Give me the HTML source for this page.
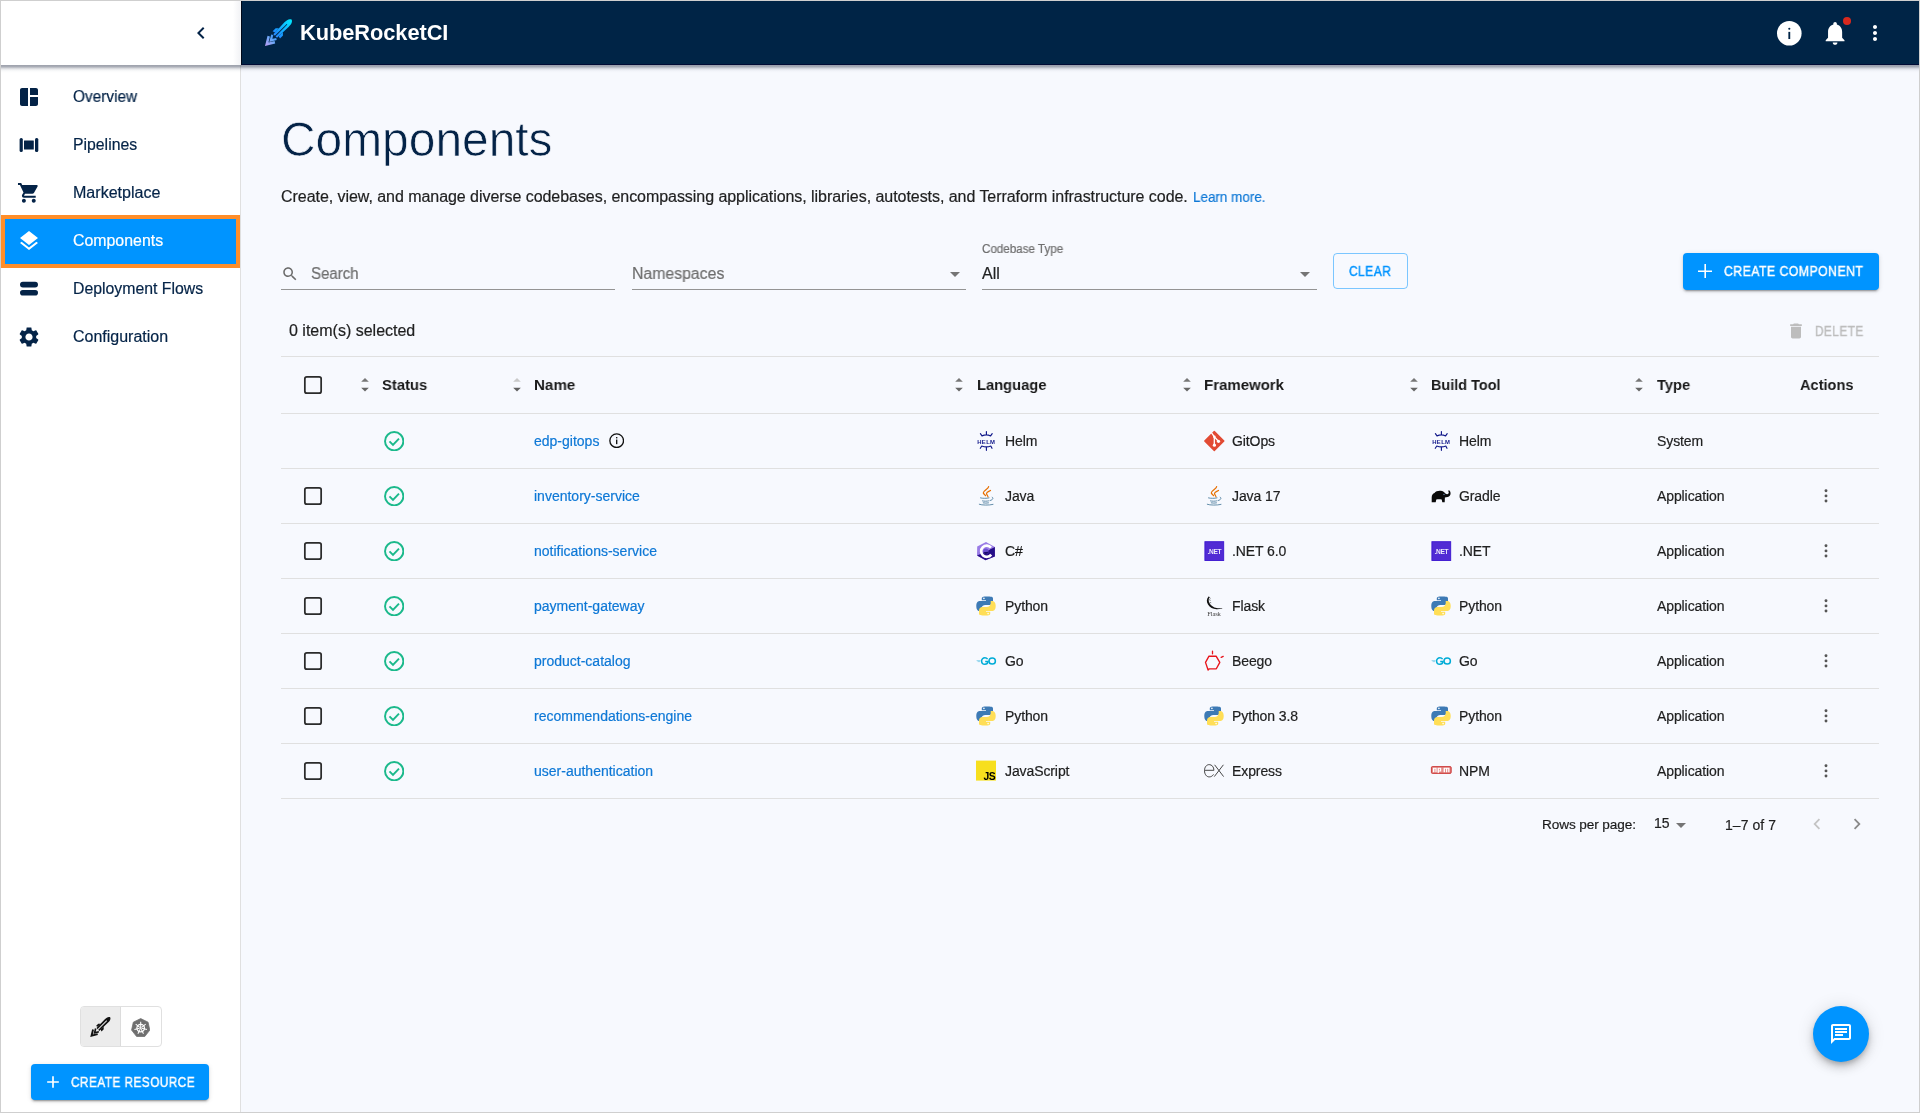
<!DOCTYPE html>
<html><head><meta charset="utf-8">
<style>
*{box-sizing:border-box;margin:0;padding:0}
html,body{width:1920px;height:1113px;overflow:hidden}
body{background:#f7f9fe;font-family:"Liberation Sans",sans-serif;position:relative;color:rgba(0,0,0,0.87)}
.abs{position:absolute}
svg.abs{will-change:transform}
.t{position:absolute;white-space:nowrap;line-height:1;will-change:transform;-webkit-text-stroke:0.2px currentColor}
</style></head>
<body>
<div class="abs" style="left:1px;top:1px;width:239px;height:1111px;background:#fff"></div>
<div class="abs" style="left:240px;top:1px;width:1px;height:1111px;background:#e0e0e0"></div>
<div class="abs" style="left:1px;top:214.8px;width:239px;height:52.8px;background:#0094ff;border:4px solid #ff8e2a"></div>
<div class="t" style="left:73.30px;top:88.73px;font-size:15.8px;color:#042347;transform:scaleX(0.9727);transform-origin:0 0;">Overview</div>
<div class="t" style="left:73.30px;top:136.73px;font-size:15.8px;color:#042347;transform:scaleX(1.0000);transform-origin:0 0;">Pipelines</div>
<div class="t" style="left:73.30px;top:184.73px;font-size:15.8px;color:#042347;transform:scaleX(1.0163);transform-origin:0 0;">Marketplace</div>
<div class="t" style="left:73.30px;top:232.73px;font-size:15.8px;color:#fff;transform:scaleX(1.0056);transform-origin:0 0;">Components</div>
<div class="t" style="left:73.30px;top:280.73px;font-size:15.8px;color:#042347;transform:scaleX(1.0008);transform-origin:0 0;">Deployment Flows</div>
<div class="t" style="left:73.30px;top:328.73px;font-size:15.8px;color:#042347;transform:scaleX(1.0117);transform-origin:0 0;">Configuration</div>
<svg class="abs" style="left:17px;top:85px;" width="24" height="24" viewBox="0 0 24 24"><g fill="#042347"><path d="M11 21H5c-1.1 0-2-.9-2-2V5c0-1.1.9-2 2-2h6v18zm2 0h6c1.1 0 2-.9 2-2v-7h-8v9zm8-11V5c0-1.1-.9-2-2-2h-6v7h8z"/></g></svg>
<svg class="abs" style="left:17px;top:133px;" width="24" height="24" viewBox="0 0 24 24"><g fill="#042347"><rect x="2.6" y="5" width="3.2" height="14" rx="1.5"/><rect x="7" y="7.4" width="9.8" height="9.2" rx="0.4"/><rect x="18" y="5" width="3.3" height="14" rx="1.5"/></g></svg>
<svg class="abs" style="left:17px;top:181px;" width="24" height="24" viewBox="0 0 24 24"><g fill="#042347" transform="scale(0.985)"><path d="M7 18c-1.1 0-1.99.9-1.99 2S5.9 22 7 22s2-.9 2-2-.9-2-2-2zM1 2v2h2l3.6 7.59-1.35 2.45c-.16.28-.25.61-.25.96 0 1.1.9 2 2 2h12v-2H7.42c-.14 0-.25-.11-.25-.25l.03-.12.9-1.63h7.45c.75 0 1.41-.41 1.75-1.03l3.58-6.49c.08-.14.12-.31.12-.48 0-.55-.45-1-1-1H5.21l-.94-2H1zm16 16c-1.1 0-1.99.9-1.99 2s.89 2 1.99 2 2-.9 2-2-.9-2-2-2z"/></g></svg>
<svg class="abs" style="left:17px;top:229px;" width="24" height="24" viewBox="0 0 24 24"><path fill="#fff" d="M11.99 18.54l-7.37-5.73L3 14.07l9 7 9-7-1.63-1.27-7.38 5.74zM12 16l7.36-5.73L21 9l-9-7-9 7 1.63 1.27L12 16z"/></svg>
<svg class="abs" style="left:17px;top:277px;" width="24" height="24" viewBox="0 0 24 24"><g fill="#042347"><rect x="3" y="4.7" width="18" height="5.8" rx="2.9"/><rect x="3" y="13" width="18" height="5.6" rx="2.8"/></g></svg>
<svg class="abs" style="left:17px;top:324.6px;" width="24" height="24" viewBox="0 0 24 24"><path fill="#042347" d="M19.14 12.94c.04-.3.06-.61.06-.94 0-.32-.02-.64-.07-.94l2.03-1.58c.18-.14.23-.41.12-.61l-1.92-3.32c-.12-.22-.37-.29-.59-.22l-2.39.96c-.5-.38-1.03-.7-1.62-.94l-.36-2.54c-.04-.24-.24-.41-.48-.41h-3.84c-.24 0-.43.17-.47.41l-.36 2.54c-.59.24-1.13.57-1.62.94l-2.39-.96c-.22-.08-.47 0-.59.22L2.74 8.87c-.12.21-.08.47.12.61l2.03 1.58c-.05.3-.09.63-.09.94s.02.64.07.94l-2.03 1.58c-.18.14-.23.41-.12.61l1.92 3.32c.12.22.37.29.59.22l2.39-.96c.5.38 1.03.7 1.62.94l.36 2.54c.05.24.24.41.48.41h3.84c.24 0 .44-.17.47-.41l.36-2.54c.59-.24 1.13-.56 1.62-.94l2.39.96c.22.08.47 0 .59-.22l1.92-3.32c.12-.22.07-.47-.12-.61l-2.01-1.58zM12 15.6c-1.98 0-3.6-1.62-3.6-3.6s1.62-3.6 3.6-3.6 3.6 1.62 3.6 3.6-1.62 3.6-3.6 3.6z"/></svg>
<div class="abs" style="left:79.5px;top:1006.3px;width:82px;height:41.2px;border:1px solid #e0e0e0;border-radius:4px;background:#fff;overflow:hidden"><div class="abs" style="left:0;top:0;width:40.5px;height:40px;background:#ececec;border-right:1px solid #dcdcdc"></div></div>
<div class="abs" style="left:31px;top:1064.2px;width:178.2px;height:35.8px;background:#0094ff;border-radius:4px;box-shadow:0 3px 1px -2px rgba(0,0,0,.2),0 2px 2px 0 rgba(0,0,0,.14),0 1px 5px 0 rgba(0,0,0,.12)"></div>
<svg class="abs" style="left:42.8px;top:1072.2px;" width="20" height="20" viewBox="0 0 24 24"><path fill="#fff" d="M19 13h-6v6h-2v-6H5v-2h6V5h2v6h6v2z"/></svg>
<div class="t" style="left:70.70px;top:1076.22px;font-size:13.8px;color:#fff;transform:scaleX(0.8501);transform-origin:0 0;-webkit-text-stroke:0.45px currentColor;letter-spacing:0.6px;">CREATE RESOURCE</div>
<div class="abs" style="left:1px;top:1px;width:240px;height:64px;background:linear-gradient(90deg,#fff 0,#fff 232px,#f1f2f5 240px);z-index:2"></div>
<svg class="abs" style="left:189.1px;top:21px;z-index:3" width="24" height="24" viewBox="0 0 24 24"><path fill="#042347" d="M15.41 7.41L14 6l-6 6 6 6 1.41-1.41L10.83 12z"/></svg>
<div class="abs" style="left:1px;top:65px;width:1918px;height:8px;z-index:2;background:linear-gradient(rgba(20,30,55,0.42) 0px,rgba(20,30,55,0.37) 1.5px,rgba(20,30,55,0.27) 2.5px,rgba(20,30,55,0.16) 3.5px,rgba(20,30,55,0.085) 4.5px,rgba(20,30,55,0.04) 5.5px,rgba(20,30,55,0.015) 6.5px,rgba(20,30,55,0) 8px)"></div>
<div class="abs" style="left:241px;top:1px;width:1678px;height:64px;background:#002446;border-left:1px solid #00091a;border-bottom:1px solid #000b35;z-index:2"></div>
<div class="abs" style="left:0;top:0;width:1920px;height:1113px;z-index:4;pointer-events:none">
<div class="t" style="left:299.50px;top:21.75px;font-size:21.8px;color:#fff;font-weight:700;-webkit-text-stroke:0;letter-spacing:-0.05px;">KubeRocketCI</div>
<svg class="abs" style="left:258px;top:14px;overflow:visible" width="40" height="40" viewBox="0 0 40 40"><defs><linearGradient id="rg" gradientUnits="userSpaceOnUse" x1="0" y1="0" x2="0" y2="38"><stop offset="0" stop-color="#00eaff"/><stop offset="0.55" stop-color="#1e8cff"/><stop offset="0.75" stop-color="#6aa8f8"/><stop offset="1" stop-color="#c79cf2"/></linearGradient></defs>
<g transform="translate(33.6 5.6) rotate(45)" fill="url(#rg)"><path d="M0 0C2.6 .9 3.2 4 3.1 7L2.6 23.2H-2.6L-3.1 7C-3.2 4-2.6 .9 0 0Z"/>
<path d="M-2.8 15.2-5.2 17.4-5.2 21.6-2.6 20.8Z"/><path d="M2.8 15.2 5.2 17.4 5.2 21.6 2.6 20.8Z"/>
<path d="M-4.5 27.8-0.2 35 4.2 27.8" fill="none" stroke="url(#rg)" stroke-width="2.5"/><path d="M-3 24.4 0 29.4 3 24.4" fill="none" stroke="url(#rg)" stroke-width="2.2"/><path d="M-0.45 6.5h0.9v17.5h-0.9z" fill="#002446"/></g></svg>
<svg class="abs" style="left:1776.8px;top:20.5px;" width="24.6" height="24.6" viewBox="0 0 24 24"><circle cx="12" cy="12" r="12" fill="#fff"/><rect x="11.1" y="10.6" width="1.8" height="7" fill="#002446"/><circle cx="12" cy="7.6" r="1.05" fill="#002446"/></svg>
<svg class="abs" style="left:1820.9px;top:18.5px;" width="28.2" height="28.2" viewBox="0 0 24 24"><path fill="#fff" d="M12 22c1.1 0 2-.9 2-2h-4c0 1.1.89 2 2 2zm6-6v-5c0-3.07-1.64-5.64-4.5-6.32V4c0-.83-.67-1.5-1.5-1.5s-1.5.67-1.5 1.5v.68C7.63 5.36 6 7.92 6 11v5l-2 2v1h16v-1l-2-2z"/></svg>
<div class="abs" style="left:1842.8px;top:16.9px;width:8.4px;height:8.4px;border-radius:50%;background:#d8291e"></div>
<svg class="abs" style="left:1863px;top:21px;" width="24" height="24" viewBox="0 0 24 24"><path fill="#fff" d="M12 8c1.1 0 2-.9 2-2s-.9-2-2-2-2 .9-2 2 .9 2 2 2zm0 2c-1.1 0-2 .9-2 2s.9 2 2 2 2-.9 2-2-.9-2-2-2zm0 6c-1.1 0-2 .9-2 2s.9 2 2 2 2-.9 2-2-.9-2-2-2z"/></svg>
</div>
<div class="t" style="left:281.00px;top:116.45px;font-size:47.9px;color:#042347;-webkit-text-stroke:0.7px #f7f9fe;paint-order:normal;">Components</div>
<div class="t" style="left:281.00px;top:188.76px;font-size:16px;color:rgba(0,0,0,0.87);letter-spacing:-0.05px;">Create, view, and manage diverse codebases, encompassing applications, libraries, autotests, and Terraform infrastructure code.</div>
<div class="t" style="left:1192.90px;top:190.10px;font-size:14.3px;color:#0e78d6;transform:scaleX(0.9403);transform-origin:0 0;">Learn more.</div>
<svg class="abs" style="left:280.7px;top:265.2px;" width="18" height="18" viewBox="0 0 24 24"><path fill="#6b6b6b" d="M15.5 14h-.79l-.28-.27C15.41 12.59 16 11.11 16 9.5 16 5.91 13.09 3 9.5 3S3 5.91 3 9.5 5.91 16 9.5 16c1.61 0 3.09-.59 4.23-1.57l.27.28v.79l5 4.99L20.49 19l-4.99-5zm-6 0C7.01 14 5 11.99 5 9.5S7.01 5 9.5 5 14 7.01 14 9.5 11.99 14 9.5 14z"/></svg>
<div class="t" style="left:311.30px;top:266.36px;font-size:16px;color:#6e6e6e;transform:scaleX(0.9389);transform-origin:0 0;">Search</div>
<div class="abs" style="left:281px;top:288.7px;width:334px;height:1px;background:#949494"></div>
<div class="t" style="left:631.90px;top:266.36px;font-size:16px;color:#6e6e6e;transform:scaleX(0.9882);transform-origin:0 0;">Namespaces</div>
<div class="abs" style="left:631.5px;top:288.7px;width:334px;height:1px;background:#949494"></div>
<svg class="abs" style="left:949.5px;top:271.7px;" width="10" height="5" viewBox="0 0 10 5"><path fill="#757575" d="M0 0h10L5 5z"/></svg>
<div class="t" style="left:982.20px;top:242.74px;font-size:12px;color:#6e6e6e;transform:scaleX(0.9678);transform-origin:0 0;">Codebase Type</div>
<div class="t" style="left:982.00px;top:266.26px;font-size:16px;color:rgba(0,0,0,0.87);">All</div>
<div class="abs" style="left:982px;top:288.7px;width:334.5px;height:1px;background:#949494"></div>
<svg class="abs" style="left:1300px;top:271.7px;" width="10" height="5" viewBox="0 0 10 5"><path fill="#757575" d="M0 0h10L5 5z"/></svg>
<div class="abs" style="left:1333px;top:253.4px;width:74.5px;height:36px;border:1px solid rgba(0,148,255,0.5);border-radius:4px"></div>
<div class="t" style="left:1349.20px;top:265.42px;font-size:13.8px;color:#0094ff;transform:scaleX(0.8636);transform-origin:0 0;-webkit-text-stroke:0.45px currentColor;letter-spacing:0.6px;">CLEAR</div>
<div class="abs" style="left:1683.4px;top:253px;width:195.6px;height:36.5px;background:#0094ff;border-radius:4px;box-shadow:0 3px 1px -2px rgba(0,0,0,.2),0 2px 2px 0 rgba(0,0,0,.14),0 1px 5px 0 rgba(0,0,0,.12)"></div>
<svg class="abs" style="left:1693px;top:258.8px;" width="24" height="24" viewBox="0 0 24 24"><path fill="#fff" d="M19 13h-6v6h-1.6v-6H5v-1.6h6.4V5H13v6.4h6z"/></svg>
<div class="t" style="left:1723.70px;top:265.12px;font-size:13.8px;color:#fff;transform:scaleX(0.8819);transform-origin:0 0;-webkit-text-stroke:0.45px currentColor;letter-spacing:0.6px;">CREATE COMPONENT</div>
<div class="t" style="left:289.00px;top:323.06px;font-size:16px;color:rgba(0,0,0,0.87);">0 item(s) selected</div>
<svg class="abs" style="left:1786.2px;top:320.8px;" width="20" height="20" viewBox="0 0 24 24"><path fill="#bdbdbd" d="M6 19c0 1.1.9 2 2 2h8c1.1 0 2-.9 2-2V7H6v12zM19 4h-3.5l-1-1h-5l-1 1H5v2h14V4z"/></svg>
<div class="t" style="left:1814.70px;top:324.92px;font-size:13.8px;color:#bdbdbd;transform:scaleX(0.8501);transform-origin:0 0;-webkit-text-stroke:0.45px currentColor;letter-spacing:0.6px;">DELETE</div>
<div class="abs" style="left:281px;top:355.5px;width:1598px;height:1px;background:#e0e0e0"></div>
<div class="abs" style="left:281px;top:412.5px;width:1598px;height:1px;background:#e0e0e0"></div>
<div class="abs" style="left:281px;top:467.5px;width:1598px;height:1px;background:#e0e0e0"></div>
<div class="abs" style="left:281px;top:522.5px;width:1598px;height:1px;background:#e0e0e0"></div>
<div class="abs" style="left:281px;top:577.5px;width:1598px;height:1px;background:#e0e0e0"></div>
<div class="abs" style="left:281px;top:632.5px;width:1598px;height:1px;background:#e0e0e0"></div>
<div class="abs" style="left:281px;top:687.5px;width:1598px;height:1px;background:#e0e0e0"></div>
<div class="abs" style="left:281px;top:742.5px;width:1598px;height:1px;background:#e0e0e0"></div>
<div class="abs" style="left:281px;top:797.5px;width:1598px;height:1px;background:#e0e0e0"></div>
<svg class="abs" style="left:300.5px;top:372.5px;" width="24" height="24" viewBox="0 0 24 24"><rect x="3.85" y="3.85" width="16.3" height="16.3" rx="2" fill="none" stroke="#2b2b2b" stroke-width="1.75"/></svg>
<svg class="abs" style="left:360.7px;top:377px;" width="8" height="16" viewBox="0 0 8 16"><path fill="#777" d="M4 1 7.8 4.8H.2z"/><path fill="#666" d="M.2 10.8h7.6L4 14.6z"/></svg>
<div class="t" style="left:382.00px;top:376.66px;font-size:15.4px;color:rgba(0,0,0,0.9);transform:scaleX(0.9618);transform-origin:0 0;font-weight:700;-webkit-text-stroke:0;">Status</div>
<svg class="abs" style="left:512.6px;top:377px;" width="8" height="16" viewBox="0 0 8 16"><path fill="#c9c9c9" d="M4 1 7.8 4.8H.2z"/><path fill="#5f5f5f" d="M.2 10.8h7.6L4 14.6z"/></svg>
<div class="t" style="left:534.40px;top:376.66px;font-size:15.4px;color:rgba(0,0,0,0.9);transform:scaleX(0.9857);transform-origin:0 0;font-weight:700;-webkit-text-stroke:0;">Name</div>
<svg class="abs" style="left:954.7px;top:377px;" width="8" height="16" viewBox="0 0 8 16"><path fill="#777" d="M4 1 7.8 4.8H.2z"/><path fill="#666" d="M.2 10.8h7.6L4 14.6z"/></svg>
<div class="t" style="left:976.60px;top:376.66px;font-size:15.4px;color:rgba(0,0,0,0.9);transform:scaleX(0.9546);transform-origin:0 0;font-weight:700;-webkit-text-stroke:0;">Language</div>
<svg class="abs" style="left:1182.5px;top:377px;" width="8" height="16" viewBox="0 0 8 16"><path fill="#777" d="M4 1 7.8 4.8H.2z"/><path fill="#666" d="M.2 10.8h7.6L4 14.6z"/></svg>
<div class="t" style="left:1204.25px;top:376.66px;font-size:15.4px;color:rgba(0,0,0,0.9);transform:scaleX(0.9738);transform-origin:0 0;font-weight:700;-webkit-text-stroke:0;">Framework</div>
<svg class="abs" style="left:1410px;top:377px;" width="8" height="16" viewBox="0 0 8 16"><path fill="#777" d="M4 1 7.8 4.8H.2z"/><path fill="#666" d="M.2 10.8h7.6L4 14.6z"/></svg>
<div class="t" style="left:1431.20px;top:376.66px;font-size:15.4px;color:rgba(0,0,0,0.9);transform:scaleX(0.9379);transform-origin:0 0;font-weight:700;-webkit-text-stroke:0;">Build Tool</div>
<svg class="abs" style="left:1635px;top:377px;" width="8" height="16" viewBox="0 0 8 16"><path fill="#777" d="M4 1 7.8 4.8H.2z"/><path fill="#666" d="M.2 10.8h7.6L4 14.6z"/></svg>
<div class="t" style="left:1656.90px;top:376.66px;font-size:15.4px;color:rgba(0,0,0,0.9);transform:scaleX(0.9540);transform-origin:0 0;font-weight:700;-webkit-text-stroke:0;">Type</div>
<div class="t" style="left:1799.80px;top:376.66px;font-size:15.4px;color:rgba(0,0,0,0.9);transform:scaleX(0.9469);transform-origin:0 0;font-weight:700;-webkit-text-stroke:0;">Actions</div>
<svg class="abs" style="left:383.90000000000003px;top:431.00000000000006px;" width="20.4" height="20.4" viewBox="0 0 20 20"><circle cx="10" cy="10" r="9" fill="none" stroke="#1bb98b" stroke-width="1.9"/><path d="M5.4 10.2l3.4 3.4 5.9-6.2" fill="none" stroke="#1bb98b" stroke-width="1.9"/></svg>
<div class="t" style="left:533.50px;top:433.95px;font-size:14px;color:#0e78d6;">edp-gitops</div>
<svg class="abs" style="left:608.7px;top:433px;" width="15.4" height="15.4" viewBox="0 0 16 16"><circle cx="8" cy="8" r="7.1" fill="none" stroke="#111" stroke-width="1.4"/><rect x="7.3" y="6.8" width="1.4" height="4.8" fill="#111"/><rect x="7.3" y="4.2" width="1.4" height="1.4" fill="#111"/></svg>
<svg class="abs" style="left:976px;top:430.6px;overflow:visible" width="20" height="20" viewBox="0 0 20 20"><g fill="none" stroke="#0f1689" stroke-width="1.15" stroke-linecap="round" stroke-linejoin="round">
<path d="M6 4.9Q10.4 3 14.6 4.9M10.4 0.6V3.6M4.4 2.7 6 4.9M16.2 2.6 14.6 4.9"/>
<path d="M5.8 15Q10.4 16.8 14.8 15M10.4 15.9V19.3M4.3 17.3 5.8 15M16 17.3 14.8 15"/></g>
<text x="10.3" y="12.5" text-anchor="middle" font-family="Liberation Sans" font-weight="700" font-size="5.9" fill="#0f1689" letter-spacing="0.35">HELM</text></svg>
<div class="t" style="left:1004.50px;top:433.95px;font-size:14px;color:rgba(0,0,0,0.87);letter-spacing:-0.1px;">Helm</div>
<svg class="abs" style="left:1203.5px;top:430.6px;overflow:visible" width="20" height="20" viewBox="0 0 20 20"><path d="M10.3 0.6 19.8 10.1 10.3 19.6 0.8 10.1Z" fill="#e24b34" stroke="#e24b34" stroke-linejoin="round" stroke-width="1.4"/>
<path d="M7.4 1.7 10.3 5.8V14M10.3 5.8 14.4 10.2" stroke="#fff" stroke-width="1.3" fill="none"/>
<circle cx="10.4" cy="14.2" r="1.6" fill="#fff"/><circle cx="10.3" cy="5.8" r="1.3" fill="#fff"/><circle cx="14.5" cy="10.3" r="1.6" fill="#fff"/></svg>
<div class="t" style="left:1232.00px;top:433.95px;font-size:14px;color:rgba(0,0,0,0.87);letter-spacing:-0.1px;">GitOps</div>
<svg class="abs" style="left:1430.5px;top:430.6px;overflow:visible" width="20" height="20" viewBox="0 0 20 20"><g fill="none" stroke="#0f1689" stroke-width="1.15" stroke-linecap="round" stroke-linejoin="round">
<path d="M6 4.9Q10.4 3 14.6 4.9M10.4 0.6V3.6M4.4 2.7 6 4.9M16.2 2.6 14.6 4.9"/>
<path d="M5.8 15Q10.4 16.8 14.8 15M10.4 15.9V19.3M4.3 17.3 5.8 15M16 17.3 14.8 15"/></g>
<text x="10.3" y="12.5" text-anchor="middle" font-family="Liberation Sans" font-weight="700" font-size="5.9" fill="#0f1689" letter-spacing="0.35">HELM</text></svg>
<div class="t" style="left:1459.00px;top:433.95px;font-size:14px;color:rgba(0,0,0,0.87);letter-spacing:-0.1px;">Helm</div>
<div class="t" style="left:1656.50px;top:433.95px;font-size:14px;color:rgba(0,0,0,0.87);letter-spacing:-0.1px;">System</div>
<svg class="abs" style="left:300.5px;top:483.6px;" width="24" height="24" viewBox="0 0 24 24"><rect x="3.85" y="3.85" width="16.3" height="16.3" rx="2" fill="none" stroke="#2b2b2b" stroke-width="1.75"/></svg>
<svg class="abs" style="left:383.90000000000003px;top:486.00000000000006px;" width="20.4" height="20.4" viewBox="0 0 20 20"><circle cx="10" cy="10" r="9" fill="none" stroke="#1bb98b" stroke-width="1.9"/><path d="M5.4 10.2l3.4 3.4 5.9-6.2" fill="none" stroke="#1bb98b" stroke-width="1.9"/></svg>
<div class="t" style="left:533.50px;top:488.95px;font-size:14px;color:#0e78d6;">inventory-service</div>
<svg class="abs" style="left:976px;top:485.6px;overflow:visible" width="20" height="20" viewBox="0 0 20 20"><g fill="none" stroke-linecap="round"><path d="M12.6 0.7C12.4 3 7 4.6 7.3 6.9 7.4 8 8.8 8.6 9.5 9.6" stroke="#e76f00" stroke-width="1.3"/>
<path d="M14.5 4.4C13.4 5.2 10.4 6.2 10.5 7.6 10.6 8.8 11.8 9.6 12 10.9" stroke="#e76f00" stroke-width="1.2"/>
<path d="M4.5 11.9C6.5 12.5 11 12.5 13 11.9M6.5 14.9C8 15.3 11 15.3 12.5 14.9M7.3 16.9C8.5 17.2 11.3 17.2 12.5 16.9M3.3 18.3C6 19.3 13 19.4 17 18.4M16.2 11.2C17.8 11.8 17 14 14 14.6" stroke="#5382a1" stroke-width="0.9"/></g></svg>
<div class="t" style="left:1004.50px;top:488.95px;font-size:14px;color:rgba(0,0,0,0.87);letter-spacing:-0.1px;">Java</div>
<svg class="abs" style="left:1203.5px;top:485.6px;overflow:visible" width="20" height="20" viewBox="0 0 20 20"><g fill="none" stroke-linecap="round"><path d="M12.6 0.7C12.4 3 7 4.6 7.3 6.9 7.4 8 8.8 8.6 9.5 9.6" stroke="#e76f00" stroke-width="1.3"/>
<path d="M14.5 4.4C13.4 5.2 10.4 6.2 10.5 7.6 10.6 8.8 11.8 9.6 12 10.9" stroke="#e76f00" stroke-width="1.2"/>
<path d="M4.5 11.9C6.5 12.5 11 12.5 13 11.9M6.5 14.9C8 15.3 11 15.3 12.5 14.9M7.3 16.9C8.5 17.2 11.3 17.2 12.5 16.9M3.3 18.3C6 19.3 13 19.4 17 18.4M16.2 11.2C17.8 11.8 17 14 14 14.6" stroke="#5382a1" stroke-width="0.9"/></g></svg>
<div class="t" style="left:1232.00px;top:488.95px;font-size:14px;color:rgba(0,0,0,0.87);letter-spacing:-0.1px;">Java 17</div>
<svg class="abs" style="left:1430.5px;top:485.6px;overflow:visible" width="20" height="20" viewBox="0 0 20 20"><path d="M0.7 16.3V11.5C0.7 9 2 7.6 3.5 7C4.5 5.4 7 4.5 9.5 4.7 12 4.9 13.5 6 14.7 7.8 16 8.6 17.1 8.2 17.6 7.2 18 6.4 17.7 5.4 17.1 5L17.9 4.2C19.1 4.8 19.9 6.4 19.5 8.2 19.1 10 17.3 11.2 15.1 11.2L13.9 11.6 13.7 16.3H11.3L10.7 13.6C8.9 13.2 6.7 13.2 5.3 13.6L4.7 16.3H3.1Z" fill="#0a0a0a"/><circle cx="13" cy="8.4" r="0.7" fill="#6f8fb5"/></svg>
<div class="t" style="left:1459.00px;top:488.95px;font-size:14px;color:rgba(0,0,0,0.87);letter-spacing:-0.1px;">Gradle</div>
<div class="t" style="left:1656.50px;top:488.95px;font-size:14px;color:rgba(0,0,0,0.87);letter-spacing:-0.1px;">Application</div>
<svg class="abs" style="left:1814px;top:484.20000000000005px;" width="24" height="24" viewBox="0 0 24 24"><g fill="#555"><circle cx="12" cy="6.8" r="1.45"/><circle cx="12" cy="11.9" r="1.45"/><circle cx="12" cy="17" r="1.45"/></g></svg>
<svg class="abs" style="left:300.5px;top:538.6px;" width="24" height="24" viewBox="0 0 24 24"><rect x="3.85" y="3.85" width="16.3" height="16.3" rx="2" fill="none" stroke="#2b2b2b" stroke-width="1.75"/></svg>
<svg class="abs" style="left:383.90000000000003px;top:541.0px;" width="20.4" height="20.4" viewBox="0 0 20 20"><circle cx="10" cy="10" r="9" fill="none" stroke="#1bb98b" stroke-width="1.9"/><path d="M5.4 10.2l3.4 3.4 5.9-6.2" fill="none" stroke="#1bb98b" stroke-width="1.9"/></svg>
<div class="t" style="left:533.50px;top:543.95px;font-size:14px;color:#0e78d6;">notifications-service</div>
<svg class="abs" style="left:976px;top:540.6px;overflow:visible" width="20" height="20" viewBox="0 0 20 20"><path d="M10 1 18.9 6V15.5L9.5 19.3 1 14.5 1.2 5.5Z" fill="#9a7ce6"/>
<path d="M1 14.5 9.5 19.3 18.9 15.5V6L10.4 10.4Z" fill="#2a0f88"/>
<path d="M15 6.6A5.6 5.6 0 1 0 15.2 13.6" fill="none" stroke="#fff" stroke-width="2.6"/>
<circle cx="9.8" cy="10.2" r="2.6" fill="#6b4fd0"/><path d="M7.4 11.2A2.6 2.6 0 0 0 12.4 10.8Z" fill="#1a0a6a"/>
<path d="M14 9h4M14 11.4h4M15.2 7.8v4.8M16.8 7.8v4.8" stroke="#20108a" stroke-width="0.7"/></svg>
<div class="t" style="left:1004.50px;top:543.95px;font-size:14px;color:rgba(0,0,0,0.87);letter-spacing:-0.1px;">C#</div>
<svg class="abs" style="left:1203.5px;top:540.6px;overflow:visible" width="20" height="20" viewBox="0 0 20 20"><rect x="0.9" y="0.7" width="18.8" height="18.8" fill="#512bd4" stroke="#3b14d0" stroke-width="0.9"/><text x="10.3" y="13" text-anchor="middle" font-family="Liberation Sans" font-weight="700" font-size="6.6" fill="#ece8fb" letter-spacing="-0.35">.NET</text></svg>
<div class="t" style="left:1232.00px;top:543.95px;font-size:14px;color:rgba(0,0,0,0.87);letter-spacing:-0.1px;">.NET 6.0</div>
<svg class="abs" style="left:1430.5px;top:540.6px;overflow:visible" width="20" height="20" viewBox="0 0 20 20"><rect x="0.9" y="0.7" width="18.8" height="18.8" fill="#512bd4" stroke="#3b14d0" stroke-width="0.9"/><text x="10.3" y="13" text-anchor="middle" font-family="Liberation Sans" font-weight="700" font-size="6.6" fill="#ece8fb" letter-spacing="-0.35">.NET</text></svg>
<div class="t" style="left:1459.00px;top:543.95px;font-size:14px;color:rgba(0,0,0,0.87);letter-spacing:-0.1px;">.NET</div>
<div class="t" style="left:1656.50px;top:543.95px;font-size:14px;color:rgba(0,0,0,0.87);letter-spacing:-0.1px;">Application</div>
<svg class="abs" style="left:1814px;top:539.2px;" width="24" height="24" viewBox="0 0 24 24"><g fill="#555"><circle cx="12" cy="6.8" r="1.45"/><circle cx="12" cy="11.9" r="1.45"/><circle cx="12" cy="17" r="1.45"/></g></svg>
<svg class="abs" style="left:300.5px;top:593.6px;" width="24" height="24" viewBox="0 0 24 24"><rect x="3.85" y="3.85" width="16.3" height="16.3" rx="2" fill="none" stroke="#2b2b2b" stroke-width="1.75"/></svg>
<svg class="abs" style="left:383.90000000000003px;top:596.0px;" width="20.4" height="20.4" viewBox="0 0 20 20"><circle cx="10" cy="10" r="9" fill="none" stroke="#1bb98b" stroke-width="1.9"/><path d="M5.4 10.2l3.4 3.4 5.9-6.2" fill="none" stroke="#1bb98b" stroke-width="1.9"/></svg>
<div class="t" style="left:533.50px;top:598.95px;font-size:14px;color:#0e78d6;">payment-gateway</div>
<svg class="abs" style="left:976px;top:595.6px;overflow:visible" width="20" height="20" viewBox="0 0 20 20"><path d="M9.9 0.4C5.5 0.4 5.8 2.3 5.8 2.3V4.3H10V4.9H4.1C2.1 4.9 0.3 6.1 0.3 9.9S1.9 15.1 3.9 15.1H5.3V12.8C5.3 10.6 7.2 8.9 9.4 8.9H13.7C15.5 8.9 17 7.4 17 5.6V2.4C17 .7 15.5.4 9.9.4Z" fill="#3d7ab5"/>
<path d="M10.1 19.6C14.5 19.6 14.2 17.7 14.2 17.7V15.7H10V15.1H15.9C17.9 15.1 19.7 13.9 19.7 10.1S18.1 4.9 16.1 4.9H14.7V7.2C14.7 9.4 12.8 11.1 10.6 11.1H6.3C4.5 11.1 3 12.6 3 14.4V17.6C3 19.3 4.5 19.6 10.1 19.6Z" fill="#ffde57"/>
<circle cx="7.9" cy="2.4" r="0.8" fill="#fff"/><circle cx="12.1" cy="17.6" r="0.8" fill="#fff"/></svg>
<div class="t" style="left:1004.50px;top:598.95px;font-size:14px;color:rgba(0,0,0,0.87);letter-spacing:-0.1px;">Python</div>
<svg class="abs" style="left:1203.5px;top:595.6px;overflow:visible" width="20" height="20" viewBox="0 0 20 20"><path d="M4.6 0.4C2.6 2.4 2.2 5.6 4 8.4 5.8 11.2 9 13 12.4 13.2 14.4 13.3 16.6 13 18.2 12.5L18.2 12C16.4 12.3 14.2 12.3 12.6 12 9.6 11.5 7 9.6 5.6 7.2 4.4 5 4.4 2.6 5.6 0.9Z" fill="#111"/>
<path d="M4.8 1.2 6.6 2.4M5 3.6 6.6 4.4M5.8 6.4 7.2 6.8" stroke="#333" stroke-width="0.6"/>
<text x="10" y="20" text-anchor="middle" font-family="Liberation Serif" font-size="6.6" fill="#444" letter-spacing="-0.2">Flask</text></svg>
<div class="t" style="left:1232.00px;top:598.95px;font-size:14px;color:rgba(0,0,0,0.87);letter-spacing:-0.1px;">Flask</div>
<svg class="abs" style="left:1430.5px;top:595.6px;overflow:visible" width="20" height="20" viewBox="0 0 20 20"><path d="M9.9 0.4C5.5 0.4 5.8 2.3 5.8 2.3V4.3H10V4.9H4.1C2.1 4.9 0.3 6.1 0.3 9.9S1.9 15.1 3.9 15.1H5.3V12.8C5.3 10.6 7.2 8.9 9.4 8.9H13.7C15.5 8.9 17 7.4 17 5.6V2.4C17 .7 15.5.4 9.9.4Z" fill="#3d7ab5"/>
<path d="M10.1 19.6C14.5 19.6 14.2 17.7 14.2 17.7V15.7H10V15.1H15.9C17.9 15.1 19.7 13.9 19.7 10.1S18.1 4.9 16.1 4.9H14.7V7.2C14.7 9.4 12.8 11.1 10.6 11.1H6.3C4.5 11.1 3 12.6 3 14.4V17.6C3 19.3 4.5 19.6 10.1 19.6Z" fill="#ffde57"/>
<circle cx="7.9" cy="2.4" r="0.8" fill="#fff"/><circle cx="12.1" cy="17.6" r="0.8" fill="#fff"/></svg>
<div class="t" style="left:1459.00px;top:598.95px;font-size:14px;color:rgba(0,0,0,0.87);letter-spacing:-0.1px;">Python</div>
<div class="t" style="left:1656.50px;top:598.95px;font-size:14px;color:rgba(0,0,0,0.87);letter-spacing:-0.1px;">Application</div>
<svg class="abs" style="left:1814px;top:594.2px;" width="24" height="24" viewBox="0 0 24 24"><g fill="#555"><circle cx="12" cy="6.8" r="1.45"/><circle cx="12" cy="11.9" r="1.45"/><circle cx="12" cy="17" r="1.45"/></g></svg>
<svg class="abs" style="left:300.5px;top:648.6px;" width="24" height="24" viewBox="0 0 24 24"><rect x="3.85" y="3.85" width="16.3" height="16.3" rx="2" fill="none" stroke="#2b2b2b" stroke-width="1.75"/></svg>
<svg class="abs" style="left:383.90000000000003px;top:651.0px;" width="20.4" height="20.4" viewBox="0 0 20 20"><circle cx="10" cy="10" r="9" fill="none" stroke="#1bb98b" stroke-width="1.9"/><path d="M5.4 10.2l3.4 3.4 5.9-6.2" fill="none" stroke="#1bb98b" stroke-width="1.9"/></svg>
<div class="t" style="left:533.50px;top:653.95px;font-size:14px;color:#0e78d6;">product-catalog</div>
<svg class="abs" style="left:976px;top:650.6px;overflow:visible" width="20" height="20" viewBox="0 0 20 20"><path d="M0.6 9.6H4.6M1.6 10.6H4.2" stroke="#6cc8e8" stroke-width="0.7"/>
<path d="M11.6 8.1C11 7.2 10.1 6.7 8.9 6.7 7 6.7 5.6 8.2 5.6 10S7 13.3 8.9 13.3C10.6 13.3 11.8 12.2 12 10.4H9.2" fill="none" stroke="#00acd7" stroke-width="1.5"/>
<ellipse cx="16.2" cy="10" rx="3.2" ry="3.1" fill="none" stroke="#00acd7" stroke-width="1.5"/></svg>
<div class="t" style="left:1004.50px;top:653.95px;font-size:14px;color:rgba(0,0,0,0.87);letter-spacing:-0.1px;">Go</div>
<svg class="abs" style="left:1203.5px;top:650.6px;overflow:visible" width="20" height="20" viewBox="0 0 20 20"><path d="M5 5.2H12.1L15.8 11.4 12.3 17.8H5.3L4.1 19 1.5 11.4Z" fill="none" stroke="#e8141b" stroke-width="1.35" stroke-linejoin="round"/><path d="M8.5 0.2V2.8M17.2 6.4 19.2 5.4" stroke="#e8141b" stroke-width="1.3" stroke-linecap="round"/></svg>
<div class="t" style="left:1232.00px;top:653.95px;font-size:14px;color:rgba(0,0,0,0.87);letter-spacing:-0.1px;">Beego</div>
<svg class="abs" style="left:1430.5px;top:650.6px;overflow:visible" width="20" height="20" viewBox="0 0 20 20"><path d="M0.6 9.6H4.6M1.6 10.6H4.2" stroke="#6cc8e8" stroke-width="0.7"/>
<path d="M11.6 8.1C11 7.2 10.1 6.7 8.9 6.7 7 6.7 5.6 8.2 5.6 10S7 13.3 8.9 13.3C10.6 13.3 11.8 12.2 12 10.4H9.2" fill="none" stroke="#00acd7" stroke-width="1.5"/>
<ellipse cx="16.2" cy="10" rx="3.2" ry="3.1" fill="none" stroke="#00acd7" stroke-width="1.5"/></svg>
<div class="t" style="left:1459.00px;top:653.95px;font-size:14px;color:rgba(0,0,0,0.87);letter-spacing:-0.1px;">Go</div>
<div class="t" style="left:1656.50px;top:653.95px;font-size:14px;color:rgba(0,0,0,0.87);letter-spacing:-0.1px;">Application</div>
<svg class="abs" style="left:1814px;top:649.2px;" width="24" height="24" viewBox="0 0 24 24"><g fill="#555"><circle cx="12" cy="6.8" r="1.45"/><circle cx="12" cy="11.9" r="1.45"/><circle cx="12" cy="17" r="1.45"/></g></svg>
<svg class="abs" style="left:300.5px;top:703.6px;" width="24" height="24" viewBox="0 0 24 24"><rect x="3.85" y="3.85" width="16.3" height="16.3" rx="2" fill="none" stroke="#2b2b2b" stroke-width="1.75"/></svg>
<svg class="abs" style="left:383.90000000000003px;top:706.0px;" width="20.4" height="20.4" viewBox="0 0 20 20"><circle cx="10" cy="10" r="9" fill="none" stroke="#1bb98b" stroke-width="1.9"/><path d="M5.4 10.2l3.4 3.4 5.9-6.2" fill="none" stroke="#1bb98b" stroke-width="1.9"/></svg>
<div class="t" style="left:533.50px;top:708.95px;font-size:14px;color:#0e78d6;">recommendations-engine</div>
<svg class="abs" style="left:976px;top:705.6px;overflow:visible" width="20" height="20" viewBox="0 0 20 20"><path d="M9.9 0.4C5.5 0.4 5.8 2.3 5.8 2.3V4.3H10V4.9H4.1C2.1 4.9 0.3 6.1 0.3 9.9S1.9 15.1 3.9 15.1H5.3V12.8C5.3 10.6 7.2 8.9 9.4 8.9H13.7C15.5 8.9 17 7.4 17 5.6V2.4C17 .7 15.5.4 9.9.4Z" fill="#3d7ab5"/>
<path d="M10.1 19.6C14.5 19.6 14.2 17.7 14.2 17.7V15.7H10V15.1H15.9C17.9 15.1 19.7 13.9 19.7 10.1S18.1 4.9 16.1 4.9H14.7V7.2C14.7 9.4 12.8 11.1 10.6 11.1H6.3C4.5 11.1 3 12.6 3 14.4V17.6C3 19.3 4.5 19.6 10.1 19.6Z" fill="#ffde57"/>
<circle cx="7.9" cy="2.4" r="0.8" fill="#fff"/><circle cx="12.1" cy="17.6" r="0.8" fill="#fff"/></svg>
<div class="t" style="left:1004.50px;top:708.95px;font-size:14px;color:rgba(0,0,0,0.87);letter-spacing:-0.1px;">Python</div>
<svg class="abs" style="left:1203.5px;top:705.6px;overflow:visible" width="20" height="20" viewBox="0 0 20 20"><path d="M9.9 0.4C5.5 0.4 5.8 2.3 5.8 2.3V4.3H10V4.9H4.1C2.1 4.9 0.3 6.1 0.3 9.9S1.9 15.1 3.9 15.1H5.3V12.8C5.3 10.6 7.2 8.9 9.4 8.9H13.7C15.5 8.9 17 7.4 17 5.6V2.4C17 .7 15.5.4 9.9.4Z" fill="#3d7ab5"/>
<path d="M10.1 19.6C14.5 19.6 14.2 17.7 14.2 17.7V15.7H10V15.1H15.9C17.9 15.1 19.7 13.9 19.7 10.1S18.1 4.9 16.1 4.9H14.7V7.2C14.7 9.4 12.8 11.1 10.6 11.1H6.3C4.5 11.1 3 12.6 3 14.4V17.6C3 19.3 4.5 19.6 10.1 19.6Z" fill="#ffde57"/>
<circle cx="7.9" cy="2.4" r="0.8" fill="#fff"/><circle cx="12.1" cy="17.6" r="0.8" fill="#fff"/></svg>
<div class="t" style="left:1232.00px;top:708.95px;font-size:14px;color:rgba(0,0,0,0.87);letter-spacing:-0.1px;">Python 3.8</div>
<svg class="abs" style="left:1430.5px;top:705.6px;overflow:visible" width="20" height="20" viewBox="0 0 20 20"><path d="M9.9 0.4C5.5 0.4 5.8 2.3 5.8 2.3V4.3H10V4.9H4.1C2.1 4.9 0.3 6.1 0.3 9.9S1.9 15.1 3.9 15.1H5.3V12.8C5.3 10.6 7.2 8.9 9.4 8.9H13.7C15.5 8.9 17 7.4 17 5.6V2.4C17 .7 15.5.4 9.9.4Z" fill="#3d7ab5"/>
<path d="M10.1 19.6C14.5 19.6 14.2 17.7 14.2 17.7V15.7H10V15.1H15.9C17.9 15.1 19.7 13.9 19.7 10.1S18.1 4.9 16.1 4.9H14.7V7.2C14.7 9.4 12.8 11.1 10.6 11.1H6.3C4.5 11.1 3 12.6 3 14.4V17.6C3 19.3 4.5 19.6 10.1 19.6Z" fill="#ffde57"/>
<circle cx="7.9" cy="2.4" r="0.8" fill="#fff"/><circle cx="12.1" cy="17.6" r="0.8" fill="#fff"/></svg>
<div class="t" style="left:1459.00px;top:708.95px;font-size:14px;color:rgba(0,0,0,0.87);letter-spacing:-0.1px;">Python</div>
<div class="t" style="left:1656.50px;top:708.95px;font-size:14px;color:rgba(0,0,0,0.87);letter-spacing:-0.1px;">Application</div>
<svg class="abs" style="left:1814px;top:704.2px;" width="24" height="24" viewBox="0 0 24 24"><g fill="#555"><circle cx="12" cy="6.8" r="1.45"/><circle cx="12" cy="11.9" r="1.45"/><circle cx="12" cy="17" r="1.45"/></g></svg>
<svg class="abs" style="left:300.5px;top:758.6px;" width="24" height="24" viewBox="0 0 24 24"><rect x="3.85" y="3.85" width="16.3" height="16.3" rx="2" fill="none" stroke="#2b2b2b" stroke-width="1.75"/></svg>
<svg class="abs" style="left:383.90000000000003px;top:761.0px;" width="20.4" height="20.4" viewBox="0 0 20 20"><circle cx="10" cy="10" r="9" fill="none" stroke="#1bb98b" stroke-width="1.9"/><path d="M5.4 10.2l3.4 3.4 5.9-6.2" fill="none" stroke="#1bb98b" stroke-width="1.9"/></svg>
<div class="t" style="left:533.50px;top:763.95px;font-size:14px;color:#0e78d6;">user-authentication</div>
<svg class="abs" style="left:976px;top:760.6px;overflow:visible" width="20" height="20" viewBox="0 0 20 20"><rect x="0" y="-0.4" width="20" height="20" fill="#f7df1e"/><text x="19.2" y="18.6" text-anchor="end" font-family="Liberation Sans" font-weight="700" font-size="10.4" fill="#000" letter-spacing="-0.5">JS</text></svg>
<div class="t" style="left:1004.50px;top:763.95px;font-size:14px;color:rgba(0,0,0,0.87);letter-spacing:-0.1px;">JavaScript</div>
<svg class="abs" style="left:1203.5px;top:760.6px;overflow:visible" width="20" height="20" viewBox="0 0 20 20"><g fill="none" stroke="#333" stroke-width="0.9"><path d="M0.7 9.3H9.9C10 6 7.8 3.6 5.2 3.6 2.6 3.6 0.5 6 0.5 9.6 0.5 13.4 2.6 15.9 5.2 15.9 7 15.9 8.6 15 9.5 13.4"/><path d="M10.6 3.8 19.6 15.6M19.4 3.8 10.3 15.6"/></g></svg>
<div class="t" style="left:1232.00px;top:763.95px;font-size:14px;color:rgba(0,0,0,0.87);letter-spacing:-0.1px;">Express</div>
<svg class="abs" style="left:1430.5px;top:760.6px;overflow:visible" width="20" height="20" viewBox="0 0 20 20"><rect x="0.4" y="5.6" width="19.8" height="6.8" rx="1" fill="#d9524f"/><rect x="1" y="6.2" width="18.6" height="5.6" fill="#e58c8a"/>
<path d="M2 6.8H5.6V11.2H4.4V7.8H3.4V11.2H2ZM6.6 6.8H10.2V10.4H7.9V12.6H6.6ZM7.9 7.8V9.4H8.9V7.8ZM11.2 6.8H18.4V11.2H17.2V7.8H16.2V11.2H15V7.8H14V11.2H12.6V6.8Z" fill="#fff"/>
<rect x="0.4" y="5.6" width="19.8" height="6.8" rx="1" fill="none" stroke="#cb3837" stroke-width="0.9"/></svg>
<div class="t" style="left:1459.00px;top:763.95px;font-size:14px;color:rgba(0,0,0,0.87);letter-spacing:-0.1px;">NPM</div>
<div class="t" style="left:1656.50px;top:763.95px;font-size:14px;color:rgba(0,0,0,0.87);letter-spacing:-0.1px;">Application</div>
<svg class="abs" style="left:1814px;top:759.2px;" width="24" height="24" viewBox="0 0 24 24"><g fill="#555"><circle cx="12" cy="6.8" r="1.45"/><circle cx="12" cy="11.9" r="1.45"/><circle cx="12" cy="17" r="1.45"/></g></svg>
<div class="t" style="left:1541.50px;top:818.09px;font-size:13.6px;color:rgba(0,0,0,0.87);letter-spacing:-0.1px;">Rows per page:</div>
<div class="t" style="left:1653.50px;top:816.45px;font-size:14px;color:rgba(0,0,0,0.87);">15</div>
<svg class="abs" style="left:1675.7px;top:822.6px;" width="10" height="5" viewBox="0 0 10 5"><path fill="#757575" d="M0 0h10L5 5z"/></svg>
<div class="t" style="left:1725.00px;top:817.75px;font-size:14px;color:rgba(0,0,0,0.87);letter-spacing:0.05px;">1–7 of 7</div>
<svg class="abs" style="left:1805px;top:812px;" width="24" height="24" viewBox="0 0 24 24"><path fill="#c4c4c4" d="M15.41 7.41L14 6l-6 6 6 6 1.41-1.41L10.83 12z" transform="translate(12 12) scale(0.9) translate(-12 -12)"/></svg>
<svg class="abs" style="left:1845px;top:812px;" width="24" height="24" viewBox="0 0 24 24"><path fill="#8a8a8a" d="M10 6L8.59 7.41 13.17 12l-4.58 4.59L10 18l6-6z" transform="translate(12 12) scale(0.9) translate(-12 -12)"/></svg>
<div class="abs" style="left:1813px;top:1006px;width:56px;height:56px;border-radius:50%;background:#0094ff;box-shadow:0 3px 5px -1px rgba(0,0,0,.2),0 6px 10px 0 rgba(0,0,0,.14),0 1px 18px 0 rgba(0,0,0,.12)"></div>
<svg class="abs" style="left:1829px;top:1022px;" width="24" height="24" viewBox="0 0 24 24"><path fill="#fff" d="M4 4h16v12H5.17L4 17.17zm0-2c-1.1 0-1.99.9-1.99 2L2 22l4-4h14c1.1 0 2-.9 2-2V4c0-1.1-.9-2-2-2zm2 10h8v2H6zm0-3h12v2H6zm0-3h12v2H6z"/></svg>
<svg class="abs" style="left:84.5px;top:1013.2px;overflow:visible" width="30" height="30" viewBox="0 0 40 40"><g transform="translate(33.6 5.6) rotate(45)" fill="#111"><path d="M0 0C2.6 .9 3.2 4 3.1 7L2.6 23.2H-2.6L-3.1 7C-3.2 4-2.6 .9 0 0Z"/>
<path d="M-2.8 15.2-5.2 17.4-5.2 21.6-2.6 20.8Z"/><path d="M2.8 15.2 5.2 17.4 5.2 21.6 2.6 20.8Z"/>
<path d="M-4.5 27.8-0.2 35 4.2 27.8" fill="none" stroke="#111" stroke-width="2.5"/><path d="M-3 24.4 0 29.4 3 24.4" fill="none" stroke="#111" stroke-width="2.2"/><path d="M-0.6 6.5h1.2v17.5h-1.2z" fill="#ececec"/></g></svg>
<svg class="abs" style="left:130.8px;top:1017.5px;" width="19.4" height="19.4" viewBox="0 0 20 20"><path d="M10 .6 17.6 4.3 19.4 12.5 14.2 19.1H5.8L.6 12.5 2.4 4.3z" fill="#6f6f6f" stroke="#6f6f6f" stroke-width="0.8" stroke-linejoin="round"/><g stroke="#fff" fill="none"><circle cx="10" cy="10.4" r="3.9" stroke-width="1.3"/><path d="M10.00 9.20L10.00 3.80" stroke-width="1.1"/><path d="M10.94 9.65L15.16 6.28" stroke-width="1.1"/><path d="M11.17 10.67L16.43 11.87" stroke-width="1.1"/><path d="M10.52 11.48L12.86 16.35" stroke-width="1.1"/><path d="M9.48 11.48L7.14 16.35" stroke-width="1.1"/><path d="M8.83 10.67L3.57 11.87" stroke-width="1.1"/><path d="M9.06 9.65L4.84 6.28" stroke-width="1.1"/></g><circle cx="10" cy="10.4" r="1" fill="#fff"/></svg>
<div class="abs" style="left:0;top:0;width:1920px;height:1113px;border:1px solid #cfcfcf;z-index:10"></div>
</body></html>
